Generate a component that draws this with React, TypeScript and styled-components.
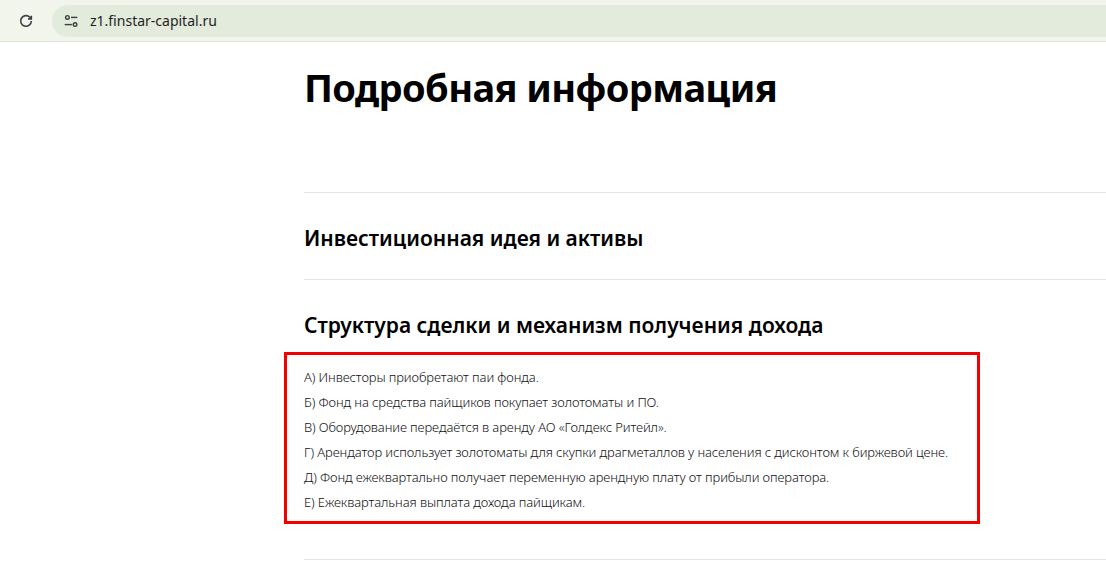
import React from "react";
import styled, { createGlobalStyle } from "styled-components";

const G = createGlobalStyle`
  html,body{margin:0;padding:0;background:#fff;}
  body{font-family:"Noto Sans",sans-serif;color:#000;}
`;
const Bar = styled.div`
  height:42px;background:#f1f5ec;border-bottom:1px solid #dfe3da;display:flex;align-items:center;box-sizing:border-box;
`;
const Reload = styled.div`width:52px;display:flex;justify-content:center;color:#3c4043;`;
const Omni = styled.div`
  height:32px;flex:1;background:#e3ebdc;border-radius:16px 0 0 16px;display:flex;align-items:center;gap:10px;padding-left:10px;
  font-size:14px;color:#1f1f1f;
`;
const Main = styled.main`padding-left:304px;`;
const Title = styled.h1`margin:0;padding-top:19px;height:150px;box-sizing:border-box;font-size:38px;font-weight:700;letter-spacing:-0.6px;`;
const Section = styled.div<{ $h: number; $pt: number }>`border-top:1px solid #e5e5e5;height:${p => p.$h}px;box-sizing:border-box;padding-top:${p => p.$pt}px;`;
const H2 = styled.h2`margin:0;font-size:21px;font-weight:600;line-height:30px;`;
const Box = styled.div`
  margin-left:-20px;width:696px;box-sizing:border-box;border:3px solid #f40000;padding:10px 0 6px 17px;
`;
const Item = styled.div`font-size:13px;font-weight:300;line-height:25px;color:#111;white-space:nowrap;letter-spacing:-0.1px;`;
const Tail = styled.div`margin-top:35px;border-top:1px solid #e5e5e5;`;

const items = [
  "А) Инвесторы приобретают паи фонда.",
  "Б) Фонд на средства пайщиков покупает золотоматы и ПО.",
  "В) Оборудование передаётся в аренду АО «Голдекс Ритейл».",
  "Г) Арендатор использует золотоматы для скупки драгметаллов у населения с дисконтом к биржевой цене.",
  "Д) Фонд ежеквартально получает переменную арендную плату от прибыли оператора.",
  "Е) Ежеквартальная выплата дохода пайщикам.",
];

export default function App() {
  return (
    <>
      <G />
      <Bar>
        <Reload>
          <svg width="16" height="16" viewBox="0 0 24 24" fill="none" stroke="#3c4043" strokeWidth="2.4"><path d="M20 12a8 8 0 1 1-2.3-5.7"/><path d="M20 4v5h-5" fill="#3c4043"/></svg>
        </Reload>
        <Omni>
          <svg width="18" height="18" viewBox="0 0 20 20" fill="none" stroke="#3c4043" strokeWidth="1.6"><circle cx="6" cy="6" r="2"/><path d="M10 6h7"/><path d="M3 14h8"/><circle cx="14.5" cy="14" r="2"/></svg>
          z1.finstar-capital.ru
        </Omni>
      </Bar>
      <Main>
        <Title>Подробная информация</Title>
        <Section $h={87} $pt={30}><H2>Инвестиционная идея и активы</H2></Section>
        <Section $h={73} $pt={30}><H2>Структура сделки и механизм получения дохода</H2></Section>
        <Box>{items.map(t => <Item key={t}>{t}</Item>)}</Box>
        <Tail />
      </Main>
    </>
  );
}
